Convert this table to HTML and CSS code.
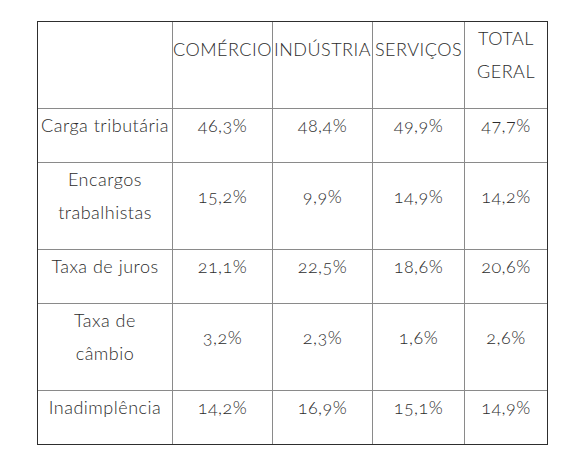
FILE: index.html
```html
<!DOCTYPE html>
<html lang="pt">
<head>
<meta charset="utf-8">
<link rel="stylesheet" href="styles.css">
</head>
<body>
<table class="grid">
  <thead>
    <tr>
      <th class="c1"><p class="one">&nbsp;</p></th>
      <th class="c2"><p class="one">COMÉRCIO</p></th>
      <th class="c3"><p class="one">INDÚSTRIA</p></th>
      <th class="c4"><p class="one">SERVIÇOS</p></th>
      <th class="c5"><p>TOTAL GERAL</p></th>
    </tr>
  </thead>
  <tbody>
    <tr>
      <td><p>Carga tributária</p></td>
      <td><p>46,3%</p></td>
      <td><p>48,4%</p></td>
      <td><p>49,9%</p></td>
      <td><p>47,7%</p></td>
    </tr>
    <tr>
      <td><p>Encargos trabalhistas</p></td>
      <td><p>15,2%</p></td>
      <td><p>9,9%</p></td>
      <td><p>14,9%</p></td>
      <td><p>14,2%</p></td>
    </tr>
    <tr>
      <td><p>Taxa de juros</p></td>
      <td><p>21,1%</p></td>
      <td><p>22,5%</p></td>
      <td><p>18,6%</p></td>
      <td><p>20,6%</p></td>
    </tr>
    <tr>
      <td><p>Taxa de<br>câmbio</p></td>
      <td><p>3,2%</p></td>
      <td><p>2,3%</p></td>
      <td><p>1,6%</p></td>
      <td><p>2,6%</p></td>
    </tr>
    <tr class="last">
      <td><p>Inadimplência</p></td>
      <td><p>14,2%</p></td>
      <td><p>16,9%</p></td>
      <td><p>15,1%</p></td>
      <td><p>14,9%</p></td>
    </tr>
  </tbody>
</table>
</body>
</html>
```

FILE: styles.css
```css
html, body {
  margin: 0;
  background: #ffffff;
}
body {
  padding: 21px 0 0 37px;
  font-family: Lato, "Open Sans", sans-serif;
  font-size: 18px;
  font-weight: 300;
  letter-spacing: 0.5px;
  color: #2c2c2c;
  font-variant-numeric: oldstyle-nums;
}
.grid {
  border-collapse: separate;
  border-spacing: 0;
  border: 1px solid #2e2e2e;
  table-layout: fixed;
  width: 511px;
}
.grid th,
.grid td {
  box-sizing: border-box;
  padding: 0;
  text-align: center;
  vertical-align: middle;
  font-weight: 300;
  border-right: 1px solid #8a8a8a;
  border-bottom: 1px solid #8a8a8a;
}
.grid th:last-child,
.grid td:last-child {
  border-right: none;
}
.grid tr.last td {
  border-bottom: none;
}
.grid p {
  margin: 0 0 20px;
  line-height: 33px;
}
.grid th p.one {
  margin-bottom: 31px;
  white-space: nowrap;
}
.c1 { width: 135px; }
.c2 { width: 100px; }
.c3 { width: 100px; }
.c4 { width: 92px; }
.c5 { width: 82px; }
```
